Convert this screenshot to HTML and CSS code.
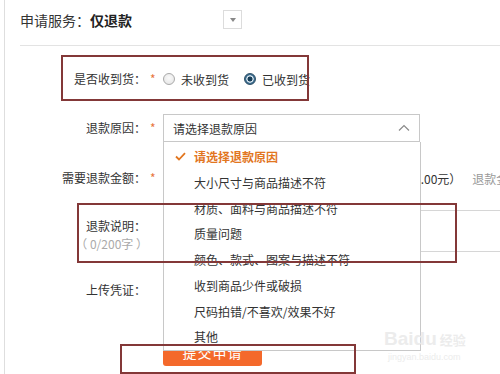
FILE: index.html
```html
<!DOCTYPE html>
<html lang="zh-CN">
<head>
<meta charset="utf-8">
<title>申请服务</title>
<link rel="stylesheet" href="styles.css">
</head>
<body>
<div class="page">
  <div class="head">
    <span class="title">申请服务：<b>仅退款</b></span>
    <span class="toggle"><i class="tri"></i></span>
  </div>
  <div class="form">
    <div class="row r1">
      <div class="label">是否收到货：</div><div class="star">*</div>
      <div class="field radios">
        <span class="opt"><span class="radio"></span>未收到货</span>
        <span class="opt"><span class="radio on"></span>已收到货</span>
      </div>
    </div>
    <div class="row r2">
      <div class="label">退款原因：</div><div class="star">*</div>
      <div class="field">
        <div class="select">
          <span>请选择退款原因</span>
          <svg class="chev" width="12" height="7" viewBox="0 0 12 7"><polyline points="1,6.5 6,1.5 11,6.5" fill="none" stroke="#8a8a8a" stroke-width="1.2"/></svg>
        </div>
      </div>
    </div>
    <div class="row r3">
      <div class="label">需要退款金额：</div><div class="star">*</div>
      <div class="field clip">
        <span class="amount"></span>
        <span class="max">（最多0.00元）</span>
        <span class="hint">退款金额</span>
      </div>
    </div>
    <div class="row r4">
      <div class="label">退款说明：<small>（ 0/200字 ）</small></div><div class="star"></div>
      <div class="field"><div class="textarea"></div></div>
    </div>
    <div class="row r5">
      <div class="label">上传凭证：</div><div class="star"></div>
      <div class="field"></div>
    </div>
    <div class="row r6">
      <div class="label"></div><div class="star"></div>
      <div class="field"><span class="submit">提交申请</span></div>
    </div>
  </div>

  <ul class="dropdown">
    <li class="sel"><svg class="check" width="11" height="9" viewBox="0 0 11 9"><polyline points="1,4.5 4,7.5 10,1.2" fill="none" stroke="#e2761f" stroke-width="1.8"/></svg>请选择退款原因</li>
    <li>大小尺寸与商品描述不符</li>
    <li>材质、面料与商品描述不符</li>
    <li>质量问题</li>
    <li>颜色、款式、图案与描述不符</li>
    <li>收到商品少件或破损</li>
    <li>尺码拍错/不喜欢/效果不好</li>
    <li>其他</li>
  </ul>

  <div class="mark m1"></div>
  <div class="mark m2"></div>
  <div class="mark m3"></div>

  <div class="watermark">
    <div class="wm-logo">Baidu<span>经验</span></div>
    <div class="wm-url">jingyan.baidu.com</div>
  </div>
</div>
</body>
</html>
```
FILE: styles.css
```css
* { box-sizing: border-box; }
html, body { margin: 0; padding: 0; background: #fff; }
body {
  font-family: "Noto Sans CJK SC", "Noto Sans", sans-serif;
  font-size: 12px;
  color: #333;
  width: 500px;
  height: 374px;
  overflow: hidden;
}
.page {
  position: relative;
  margin-left: 4px;
  border-left: 1px solid #dedede;
  height: 374px;
}
.head {
  height: 46px;
  margin-left: 15px;
  border-bottom: 1px solid #e3e3e3;
  display: flex;
  align-items: center;
  padding-bottom: 6px;
}
.title { font-size: 14px; color: #333; line-height: 20px; }
.title b { color: #222; font-weight: bold; }
.toggle {
  margin-left: 91px;
  width: 19px;
  height: 19px;
  border: 1px solid #dcdcdc;
  display: flex;
  align-items: center;
  justify-content: center;
}
.tri {
  width: 0; height: 0;
  border-left: 3.5px solid transparent;
  border-right: 3.5px solid transparent;
  border-top: 4px solid #888;
}
.form { display: flex; flex-direction: column; margin-top: 10px; }
.row { display: flex; align-items: center; }
.label {
  width: 141px;
  text-align: right;
  color: #333;
  line-height: 18px;
  flex: none;
}
.label small { display: block; font-size: 12px; color: #aaa; margin-right: -2px; }
.star { width: 17px; flex: none; color: #e8743b; padding-left: 4px; line-height: 18px; }
.field { display: flex; align-items: center; flex: 1; min-width: 0; }
.clip { overflow: hidden; }
.r1 { height: 46px; }
.r2 { height: 52px; }
.r3 { height: 48px; }
.r4 { height: 57px; align-items: flex-start; }
.r4 .label { padding-top: 15px; }
.r5 { height: 77px; align-items: flex-start; }
.r5 .label { padding-top: 22px; }
.r6 { height: 30px; }
.radios { gap: 15px; }
.opt { display: flex; align-items: center; gap: 6px; }
.radio {
  width: 12px; height: 12px; border-radius: 50%;
  border: 1px solid #a9a9a9;
  background: radial-gradient(circle at 50% 40%, #fafafa 0, #e2e2e2 100%);
}
.radio.on {
  border-color: #2e4f66;
  background: radial-gradient(circle, #183e58 0 2.2px, #d9e6ef 2.8px 3.4px, #3c6d8f 4px);
}
.select {
  width: 257px;
  height: 28px;
  border: 1px solid #c8c8c8;
  display: flex;
  align-items: center;
  justify-content: space-between;
  padding: 0 9px 0 9px;
  color: #333;
}
.chev { margin-top: -2px; }
.amount { width: 208px; height: 26px; border: 1px solid #ccc; flex: none; }
.max { margin-left: 7px; color: #333; white-space: nowrap; }
.hint { margin-left: 11px; color: #999; white-space: nowrap; }
.textarea {
  margin-top: 8px;
  width: 400px;
  height: 42px;
  border: 1px solid #d6d6d6;
  flex: none;
}
.submit {
  width: 99px;
  height: 30px;
  background: #f4692b;
  color: #fff;
  border-radius: 3px;
  font-size: 14px;
  display: flex;
  align-items: center;
  justify-content: center;
  letter-spacing: 1px;
  padding-top: 2px;
}
.dropdown {
  position: absolute;
  left: 158px;
  top: 142px;
  width: 258px;
  height: 209px;
  margin: 0;
  padding: 2px 0 0 0;
  list-style: none;
  background: #fff;
  border: 1px solid #c8c8c8;
  border-top: none;
}
.dropdown li {
  height: 25.75px;
  line-height: 25.75px;
  padding-left: 30px;
  color: #333;
  white-space: nowrap;
  position: relative;
}
.dropdown li.sel { color: #e2761f; font-weight: bold; }
.check { position: absolute; left: 11px; top: 8px; }
.mark {
  position: absolute;
  border: 2px solid #833838;
}
.m1 { left: 56px; top: 55px; width: 248px; height: 46px; }
.m2 { left: 72px; top: 203px; width: 380px; height: 60px; }
.m3 { left: 115px; top: 344px; width: 236px; height: 30px; }
.watermark {
  position: absolute;
  left: 379px;
  top: 328px;
  color: #ececec;
}
.wm-logo { font-family: "Liberation Sans", sans-serif; font-size: 19px; font-weight: bold; line-height: 22px; }
.wm-logo span { font-family: "Noto Sans CJK SC", sans-serif; font-size: 13px; margin-left: 3px; }
.wm-url { font-family: "Liberation Sans", sans-serif; font-size: 9px; line-height: 12px; margin-left: 4px; }
```
